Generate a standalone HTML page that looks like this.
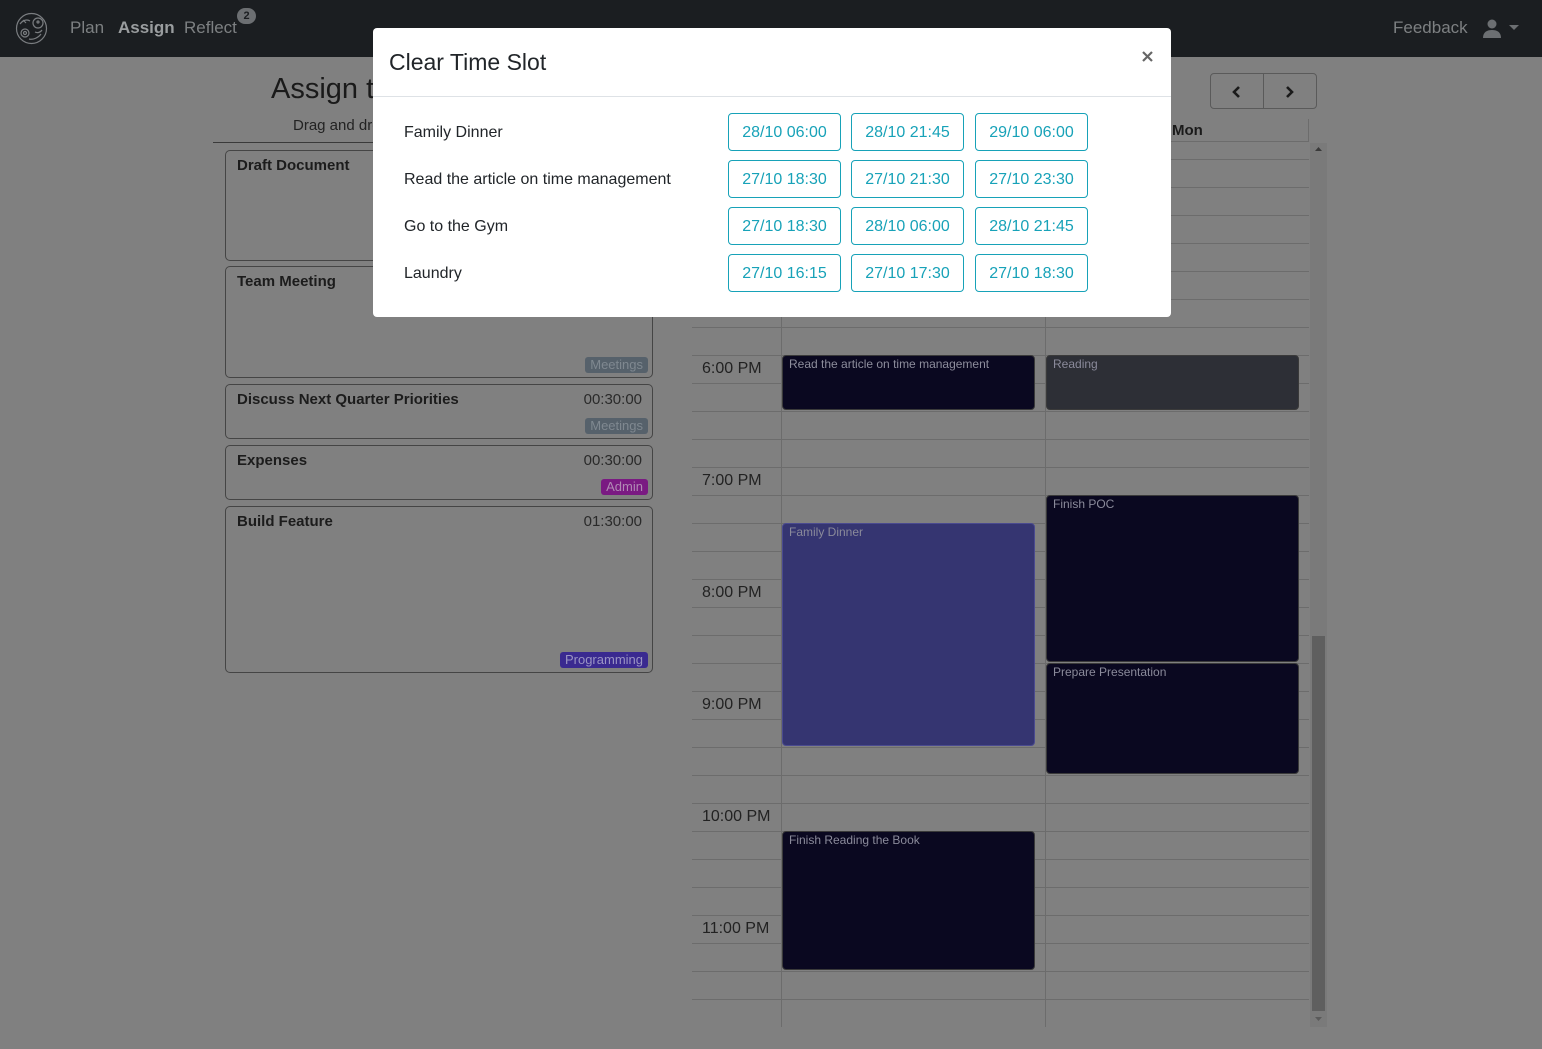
<!DOCTYPE html>
<html><head><meta charset="utf-8"><style>
*{box-sizing:border-box;margin:0;padding:0}
body{width:1542px;height:1049px;background:#808080;font-family:"Liberation Sans",sans-serif;position:relative;overflow:hidden;color:#1a1a1a}
.a{position:absolute}
.nav{left:0;top:0;width:1542px;height:57px;background:#1b1e21}
.nl{font-size:17px;color:#7d8082;top:18px}
.card{position:absolute;left:225px;width:428px;border:1px solid #454545;border-radius:5px}
.card .t{position:absolute;left:11px;top:6px;font-weight:bold;font-size:15px;color:#1c1c1c}
.card .d{position:absolute;right:10px;top:6px;font-size:15px;color:#2a2a2a}
.badge{position:absolute;right:4px;bottom:4px;font-size:13px;padding:0 5px;border-radius:3px;line-height:16px}
.hl{position:absolute;left:692px;width:617px;height:1px;background:#6c6c6c}
.tm{position:absolute;left:702px;font-size:16px;color:#222}
.ev{position:absolute;border-radius:4px;font-size:12px;color:#8a8a9a;padding:1px 6px;border:1px solid #3a3a3a}
.modal{left:373px;top:28px;width:798px;height:289px;background:#fff;border-radius:4px}
.lb{position:absolute;left:31px;font-size:16px;color:#212529}
.bt{position:absolute;width:113px;height:38px;border:1px solid #17a2b8;border-radius:4px;color:#17a2b8;font-size:16px;text-align:center;line-height:38px}
</style></head><body>
<div class="a nav"></div>
<svg class="a" style="left:15px;top:12px" width="33" height="33" viewBox="0 0 33 33" fill="none" stroke="#7a7d80" stroke-width="1.2"><circle cx="16.5" cy="16.5" r="15"/><circle cx="10" cy="21" r="4"/><circle cx="10" cy="21" r="1.5"/><circle cx="23" cy="11" r="5"/><circle cx="23" cy="10" r="1"/><path d="M5 12c3-4 7-5 10-3M14 27c4 1 9-1 12-5M20 20c2 1 5 1 7-2M8 8l3 3"/></svg>
<div class="a nl" style="left:70px">Plan</div>
<div class="a nl" style="left:118px;color:#9a9d9f;font-weight:bold">Assign</div>
<div class="a nl" style="left:184px">Reflect</div>
<div class="a" style="left:237px;top:8px;width:19px;height:16px;border-radius:8px;background:#6c6f72;color:#1b1e21;font-size:11px;font-weight:bold;text-align:center;line-height:16px">2</div>
<div class="a nl" style="left:1393px">Feedback</div>
<svg class="a" style="left:1482px;top:19px" width="40" height="20" viewBox="0 0 40 20"><circle cx="10" cy="5" r="4.5" fill="#6c6f72"/><path d="M1 19c0-6 4-8 9-8s9 2 9 8z" fill="#6c6f72"/><path d="M27 6h10l-5 5z" fill="#6c6f72"/></svg>

<div class="a" style="left:271px;top:73px;font-size:29px;color:#1a1a1a">Assign tasks</div>
<div class="a" style="left:293px;top:117px;font-size:15px;color:#222">Drag and drop</div>
<div class="a" style="left:213px;top:142px;width:480px;height:1px;background:#3a3a3a"></div>

<div class="card" style="top:150px;height:111px"><div class="t">Draft Document</div></div>
<div class="card" style="top:266px;height:112px"><div class="t">Team Meeting</div><div class="badge" style="background:#56616b;color:#7f8890">Meetings</div></div>
<div class="card" style="top:384px;height:55px"><div class="t">Discuss Next Quarter Priorities</div><div class="d">00:30:00</div><div class="badge" style="background:#56616b;color:#7f8890">Meetings</div></div>
<div class="card" style="top:445px;height:55px"><div class="t">Expenses</div><div class="d">00:30:00</div><div class="badge" style="background:#7a1a82;color:#b08ab4">Admin</div></div>
<div class="card" style="top:506px;height:167px"><div class="t">Build Feature</div><div class="d">01:30:00</div><div class="badge" style="background:#3a2a90;color:#9a94c4">Programming</div></div>

<div class="a" style="left:1210px;top:73px;width:107px;height:36px;border:1px solid #5a5a5a;border-radius:4px"></div>
<div class="a" style="left:1263px;top:74px;width:1px;height:34px;background:#5a5a5a"></div>
<svg class="a" style="left:1230px;top:84px" width="70" height="16" viewBox="0 0 70 16" fill="none" stroke="#1a1a1a" stroke-width="2.6"><path d="M9 3l-5 5 5 5M57 3l5 5-5 5"/></svg>
<div class="a" style="left:1172px;top:122px;font-size:15px;font-weight:bold;color:#1a1a1a">Mon</div>
<div class="a" style="left:1308px;top:119px;width:1px;height:22px;background:#6c6c6c"></div>

<div class="hl" style="top:141px"></div>
<div class="hl" style="top:159px"></div><div class="hl" style="top:187px"></div><div class="hl" style="top:215px"></div><div class="hl" style="top:243px"></div><div class="hl" style="top:271px"></div><div class="hl" style="top:299px"></div><div class="hl" style="top:327px"></div><div class="hl" style="top:355px"></div><div class="hl" style="top:383px"></div><div class="hl" style="top:411px"></div><div class="hl" style="top:439px"></div><div class="hl" style="top:467px"></div><div class="hl" style="top:495px"></div><div class="hl" style="top:523px"></div><div class="hl" style="top:551px"></div><div class="hl" style="top:579px"></div><div class="hl" style="top:607px"></div><div class="hl" style="top:635px"></div><div class="hl" style="top:663px"></div><div class="hl" style="top:691px"></div><div class="hl" style="top:719px"></div><div class="hl" style="top:747px"></div><div class="hl" style="top:775px"></div><div class="hl" style="top:803px"></div><div class="hl" style="top:831px"></div><div class="hl" style="top:859px"></div><div class="hl" style="top:887px"></div><div class="hl" style="top:915px"></div><div class="hl" style="top:943px"></div><div class="hl" style="top:971px"></div><div class="hl" style="top:999px"></div>
<div class="a" style="left:781px;top:141px;width:1px;height:886px;background:#6c6c6c"></div>
<div class="a" style="left:1045px;top:141px;width:1px;height:886px;background:#6c6c6c"></div>

<div class="tm" style="top:360px">6:00 PM</div>
<div class="tm" style="top:472px">7:00 PM</div>
<div class="tm" style="top:584px">8:00 PM</div>
<div class="tm" style="top:696px">9:00 PM</div>
<div class="tm" style="top:808px">10:00 PM</div>
<div class="tm" style="top:920px">11:00 PM</div>

<div class="a" style="left:1310px;top:143px;width:17px;height:884px;background:#7a7a7a"></div>
<div class="a" style="left:1312px;top:636px;width:13px;height:375px;background:#5f5f5f"></div>
<svg class="a" style="left:1313px;top:145px" width="11" height="880" viewBox="0 0 11 880"><path d="M2 6h7l-3.5-4z" fill="#3a3a3a"/><path d="M2 872h7l-3.5 4z" fill="#5a5a5a"/></svg>

<div class="ev" style="left:782px;top:355px;width:253px;height:55px;background:#0a0820;color:#8d8d9c">Read the article on time management</div>
<div class="ev" style="left:1046px;top:355px;width:253px;height:55px;background:#2d2f36">Reading</div>
<div class="ev" style="left:782px;top:523px;width:253px;height:223px;background:#353571;border-color:#4a4a90">Family Dinner</div>
<div class="ev" style="left:1046px;top:495px;width:253px;height:167px;background:#0a0820">Finish POC</div>
<div class="ev" style="left:1046px;top:663px;width:253px;height:111px;background:#0a0820">Prepare Presentation</div>
<div class="ev" style="left:782px;top:831px;width:253px;height:139px;background:#0a0820">Finish Reading the Book</div>

<div class="a modal">
<div class="a" style="left:16px;top:21px;font-size:23px;color:#212529">Clear Time Slot</div>
<svg class="a" style="left:769px;top:23px" width="11" height="11" viewBox="0 0 11 11" stroke="#666" stroke-width="2.2"><path d="M1 1l9 9M10 1l-9 9"/></svg>
<div class="a" style="left:0;top:68px;width:798px;height:1px;background:#dee2e6"></div>
<div class="lb" style="top:96px">Family Dinner</div>
<div class="lb" style="top:143px">Read the article on time management</div>
<div class="lb" style="top:190px">Go to the Gym</div>
<div class="lb" style="top:237px">Laundry</div>
<div class="bt" style="left:355px;top:85px">28/10 06:00</div><div class="bt" style="left:478px;top:85px">28/10 21:45</div><div class="bt" style="left:602px;top:85px">29/10 06:00</div>
<div class="bt" style="left:355px;top:132px">27/10 18:30</div><div class="bt" style="left:478px;top:132px">27/10 21:30</div><div class="bt" style="left:602px;top:132px">27/10 23:30</div>
<div class="bt" style="left:355px;top:179px">27/10 18:30</div><div class="bt" style="left:478px;top:179px">28/10 06:00</div><div class="bt" style="left:602px;top:179px">28/10 21:45</div>
<div class="bt" style="left:355px;top:226px">27/10 16:15</div><div class="bt" style="left:478px;top:226px">27/10 17:30</div><div class="bt" style="left:602px;top:226px">27/10 18:30</div>
</div>
</body></html>
